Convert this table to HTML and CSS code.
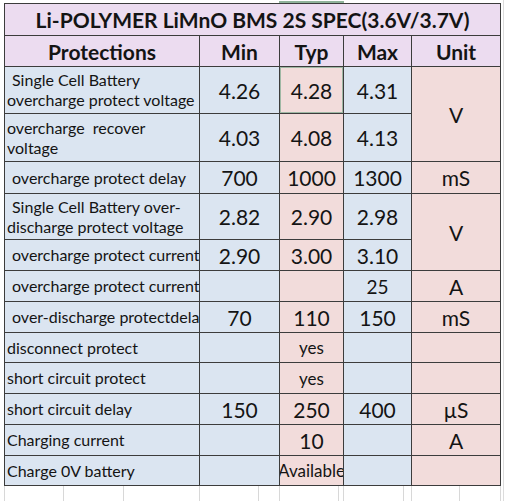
FILE: index.html
```html
<!DOCTYPE html>
<html lang="en">
<head>
    <meta charset="UTF-8">
    <meta name="viewport" content="width=device-width, initial-scale=1.0">
    <title>Li-POLYMER LiMnO BMS 2S SPEC</title>
    <link rel="stylesheet" href="styles.css">
</head>
<body>
    <div class="sheet">
        <div class="selection-mark"></div>

        <table class="spec">
            <colgroup>
                <col class="c-name">
                <col class="c-min">
                <col class="c-typ">
                <col class="c-max">
                <col class="c-unit">
            </colgroup>

            <tr class="h32">
                <th class="title" colspan="5">Li-POLYMER LiMnO BMS 2S SPEC(3.6V/3.7V)</th>
            </tr>
            <tr class="h31">
                <th class="head">Protections</th>
                <th class="head">Min</th>
                <th class="head">Typ</th>
                <th class="head">Max</th>
                <th class="head">Unit</th>
            </tr>

            <tr class="h47">
                <td class="label ind">Single Cell Battery<br>overcharge protect voltage</td>
                <td class="num min">4.26</td>
                <td class="num typ sel">4.28</td>
                <td class="num max">4.31</td>
                <td class="num unit" rowspan="2">V</td>
            </tr>
            <tr class="h48">
                <td class="label">overcharge&nbsp; recover<br>voltage</td>
                <td class="num min">4.03</td>
                <td class="num typ">4.08</td>
                <td class="num max">4.13</td>
            </tr>
            <tr class="h32">
                <td class="label ind">overcharge protect delay</td>
                <td class="num min">700</td>
                <td class="num typ">1000</td>
                <td class="num max">1300</td>
                <td class="num unit">mS</td>
            </tr>
            <tr class="h46">
                <td class="label ind">Single Cell Battery over-<br>discharge protect voltage</td>
                <td class="num min">2.82</td>
                <td class="num typ">2.90</td>
                <td class="num max">2.98</td>
                <td class="num unit" rowspan="2">V</td>
            </tr>
            <tr class="h31">
                <td class="label ind">overcharge protect current</td>
                <td class="num min">2.90</td>
                <td class="num typ">3.00</td>
                <td class="num max">3.10</td>
            </tr>
            <tr class="h31">
                <td class="label ind">overcharge protect current</td>
                <td class="num min"></td>
                <td class="num typ"></td>
                <td class="num max small">25</td>
                <td class="num unit">A</td>
            </tr>
            <tr class="h31">
                <td class="label ind">over-discharge protectdelay</td>
                <td class="num min">70</td>
                <td class="num typ">110</td>
                <td class="num max">150</td>
                <td class="num unit">mS</td>
            </tr>
            <tr class="h30">
                <td class="label">disconnect protect</td>
                <td class="num min"></td>
                <td class="num typ text">yes</td>
                <td class="num max"></td>
                <td class="num unit"></td>
            </tr>
            <tr class="h31">
                <td class="label">short circuit protect</td>
                <td class="num min"></td>
                <td class="num typ text">yes</td>
                <td class="num max"></td>
                <td class="num unit"></td>
            </tr>
            <tr class="h31">
                <td class="label">short circuit delay</td>
                <td class="num min">150</td>
                <td class="num typ">250</td>
                <td class="num max">400</td>
                <td class="num unit">µS</td>
            </tr>
            <tr class="h31">
                <td class="label">Charging current</td>
                <td class="num min"></td>
                <td class="num typ">10</td>
                <td class="num max"></td>
                <td class="num unit">A</td>
            </tr>
            <tr class="h30">
                <td class="label">Charge 0V battery</td>
                <td class="num min"></td>
                <td class="num typ text"><div class="spill">Available</div></td>
                <td class="num max"></td>
                <td class="num unit"></td>
            </tr>
        </table>

        <!-- empty spreadsheet cells under the table -->
        <div class="blank-row">
            <div></div><div></div><div></div><div></div><div></div><div></div>
            <div></div><div></div><div></div><div></div><div></div>
        </div>
    </div>
</body>
</html>
```

FILE: styles.css
```css
body {
    margin: 0;
    background-color: #ffffff;
    color: #141414;
    font-family: Lato, "Noto Sans", sans-serif;
}

.sheet {
    position: relative;
    width: 499px;
    margin-left: 4px;
    padding-top: 3px;
    border-right: 1px solid #dcdcdc;
    height: 498px;
}

/* excel column selection marker */
.selection-mark {
    position: absolute;
    left: 275px;
    top: 1px;
    width: 65px;
    height: 2px;
    background-color: #8fb39a;
}

.spec {
    border-collapse: collapse;
    table-layout: fixed;
    width: 497px;
}

.spec th,
.spec td {
    border: 1px solid #3c3c3c;
    padding: 0;
    overflow: hidden;
    white-space: nowrap;
}

.c-name { width: 195px; }
.c-min { width: 80px; }
.c-typ { width: 64px; }
.c-max { width: 68px; }
.c-unit { width: 89px; }

.h30 { height: 30px; }
.h31 { height: 31px; }
.h32 { height: 32px; }
.h46 { height: 46px; }
.h47 { height: 47px; }
.h48 { height: 48px; }

.title,
.head {
    background-color: #ecdcf0;
    font-size: 21px;
    font-weight: bold;
    text-align: center;
}

.spec .label {
    background-color: #dbe5f1;
    font-size: 16px;
    line-height: 20px;
    text-align: left;
    padding-left: 2px;
}

.spec .label.ind {
    text-indent: 5px;
}

.num {
    font-size: 21px;
    text-align: center;
}

.min,
.max {
    background-color: #dbe5f1;
}

.typ,
.unit {
    background-color: #f2dcdb;
}

.small {
    font-size: 19px;
}

.text {
    font-size: 17px;
}

.sel {
    box-shadow: inset 0 0 0 1px #9fb8a4;
}

.spill {
    display: flex;
    justify-content: center;
    overflow: hidden;
}

.blank-row {
    display: grid;
    grid-template-columns: 59px 60px 76px 59px 21px 59px 5px 60px 8px 48px 41px;
    height: 15px;
    border-left: 1px solid #d8d8d8;
}

.blank-row div {
    border-right: 1px solid #d8d8d8;
}
```
